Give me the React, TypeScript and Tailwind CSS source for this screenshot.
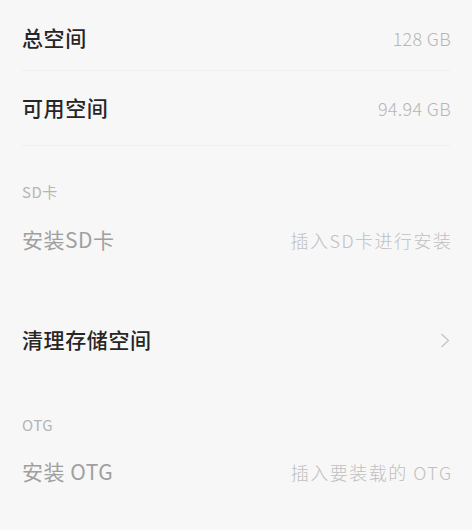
import React from "react";

const font = { fontFamily: '"Noto Sans CJK SC", "Noto Sans", sans-serif' };

function Row({
  label,
  value,
  valueCls,
  dim,
  chevron,
  h,
}: {
  label: string;
  value?: string;
  valueCls?: string;
  dim?: boolean;
  chevron?: boolean;
  h: string;
}) {
  return (
    <div className={`flex items-center justify-between pl-[22px] pr-[21px] ${h}`}>
      <span
        className={
          dim
            ? "text-[21px] tracking-[0.5px] text-[#a0a0a0] font-normal"
            : "text-[21px] tracking-[0.6px] text-[#262626] font-medium"
        }
      >
        {label}
      </span>
      {value && <span className={valueCls}>{value}</span>}
      {chevron && (
        <svg width="10" height="15" viewBox="0 0 10 15" className="mr-[1px]">
          <path d="M1.5 1 L8.5 7.5 L1.5 14" fill="none" stroke="#c4c4c4" strokeWidth="1.3" />
        </svg>
      )}
    </div>
  );
}

function Divider() {
  return <div className="mx-[22px] h-px bg-[#efefef]" />;
}

function Header({ text }: { text: string }) {
  return (
    <div className="flex h-[30px] items-center px-[22px] text-[15px] tracking-[0.5px] text-[#b5b5b5]">
      {text}
    </div>
  );
}

const numCls = "text-[18px] tracking-[0.3px] text-[#b6b6b6] font-light";
const hintCls = "text-[18px] tracking-[1.5px] text-[#c0c0c0] font-light -mr-[1.5px]";

export default function App() {
  return (
    <div className="h-[530px] w-[472px] overflow-hidden bg-[#f7f7f7]" style={font}>
      <div className="pt-[6px]">
        <Row label="总空间" value="128 GB" valueCls={numCls} h="h-[64px]" />
      </div>
      <Divider />
      <Row label="可用空间" value="94.94 GB" valueCls={numCls} h="h-[74px]" />
      <Divider />
      <div className="h-[31px]" />
      <Header text="SD卡" />
      <Row label="安装SD卡" value="插入SD卡进行安装" valueCls={hintCls} dim h="h-[66px]" />
      <div className="h-[34px]" />
      <Row label="清理存储空间" chevron h="h-[66px]" />
      <div className="h-[37px]" />
      <Header text="OTG" />
      <Row label="安装 OTG" value="插入要装载的 OTG" valueCls={hintCls} dim h="h-[64px]" />
    </div>
  );
}
